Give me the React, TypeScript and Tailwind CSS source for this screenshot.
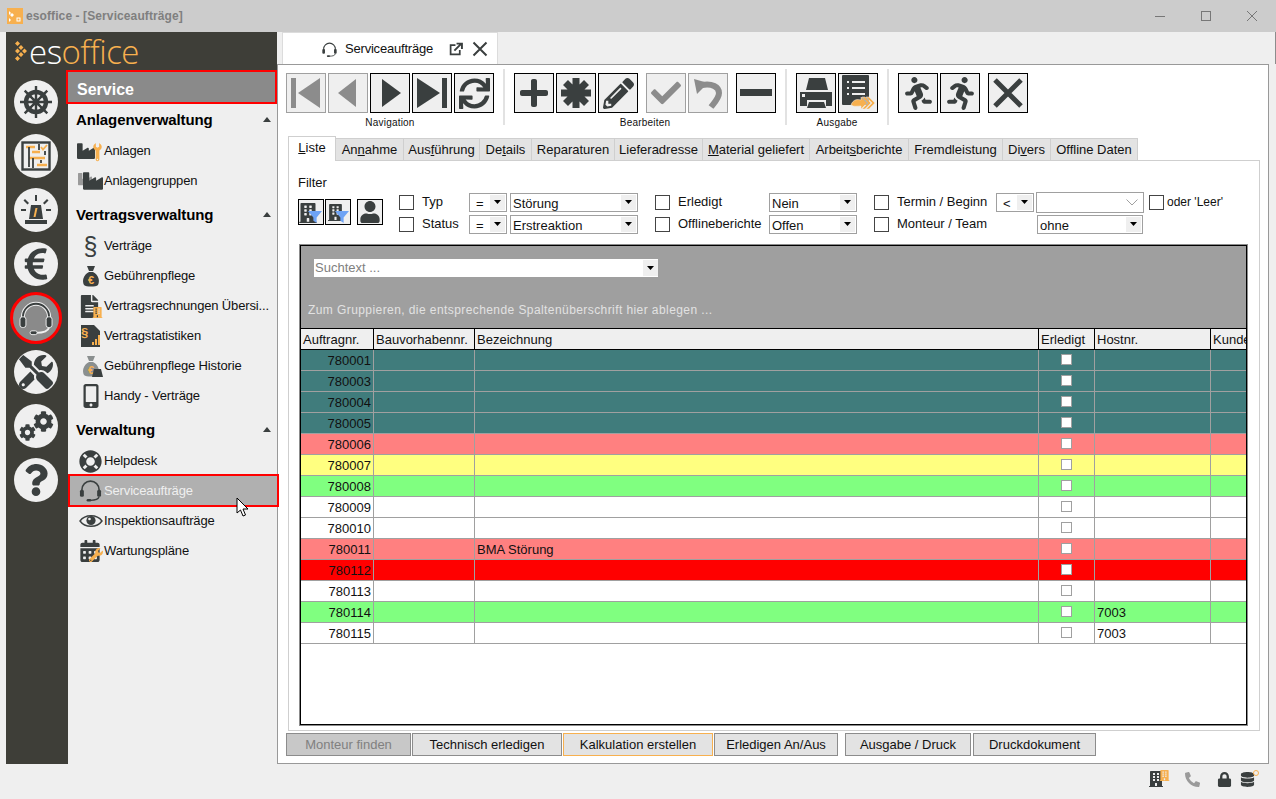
import type { ReactNode } from 'react';
import {
  FaBuilding, FaCalendarAlt, FaCheck, FaCog, FaDatabase, FaEuroSign, FaFileAlt,
  FaIndustry, FaLifeRing, FaLock, FaMobileAlt, FaPencilAlt, FaPhoneAlt, FaPlus,
  FaQuestion, FaRunning, FaSync, FaTools, FaUser, FaWrench,
} from 'react-icons/fa';

const DARK = '#3a3f3f';
const ORANGE = '#f7b04f';

const Headset = ({ size = 24, color = DARK, outline }: { size?: number; color?: string; outline?: boolean }) => (
  <svg width={size} height={size} viewBox="0 0 32 32" fill="none">
    {outline && <path d="M5 19 V15 A11 11 0 0 1 27 15 V19" stroke="#efefef" strokeWidth="3.4" />}
    <path d="M5 19 V15 A11 11 0 0 1 27 15 V19" stroke={color} strokeWidth={outline ? 1.6 : 2} />
    <rect x="2.5" y="15" width="5" height="9" rx="2" fill={color} stroke={outline ? '#efefef' : 'none'} strokeWidth="0.8" />
    <rect x="24.5" y="15" width="5" height="9" rx="2" fill={color} stroke={outline ? '#efefef' : 'none'} strokeWidth="0.8" />
    <path d="M27 24 C26 28 21 28.5 16 28.5" stroke={outline ? '#efefef' : color} strokeWidth="1.6" />
    <rect x="11" y="26.8" width="6" height="3.2" rx="1.6" fill={color} stroke={outline ? '#efefef' : 'none'} strokeWidth="0.8" />
  </svg>
);

const WheelIcon = () => (
  <svg width="32" height="32" viewBox="0 0 32 32" fill="none" stroke={DARK}>
    <path d="M16 0 V32 M0 16 H32 M4.7 4.7 L27.3 27.3 M27.3 4.7 L4.7 27.3" strokeWidth="2.4" />
    <circle cx="16" cy="16" r="10" strokeWidth="4.4" />
    <circle cx="16" cy="16" r="3.4" fill={DARK} strokeWidth="0" />
    <path d="M16 9 V23 M9 16 H23 M11 11 L21 21 M21 11 L11 21" strokeWidth="1.6" />
  </svg>
);

const BagIcon = ({ faded }: { faded?: boolean }) => (
  <svg width="24" height="24" viewBox="0 0 24 24">
    <path d="M8 2 L16 2 L14 7 L10 7 Z M10 8 L14 8 C20 11 21 17 19 21 C17 23 7 23 5 21 C3 17 4 11 10 8 Z" fill={faded ? '#8a8f8f' : DARK} />
    <text x="12" y="20" textAnchor="middle" fontSize="11" fontWeight="700" fill={ORANGE} fontFamily="'Liberation Sans', sans-serif">€</text>
    {faded && <path d="M13 23 L15 15 H22 L24 23 Z" fill={DARK} />}
  </svg>
);

const PlanIcon = () => (
  <svg width="30" height="30" viewBox="0 0 30 30" fill="none">
    <rect x="1.5" y="1.5" width="27" height="27" stroke={DARK} strokeWidth="2.4" />
    <path d="M5 6 H14 M11 11 H19 M8 17 H24 M16 24 H26" stroke={ORANGE} strokeWidth="2.4" />
    <path d="M8 6 V26 M18 3 V9 M12 17 V27 M20 19 V22 M24 10 V14" stroke={DARK} strokeWidth="1.8" />
    <path d="M20 6 L22 8.5 L26 4" stroke={ORANGE} strokeWidth="1.8" />
  </svg>
);

const BeaconIcon = () => (
  <svg width="32" height="32" viewBox="0 0 32 32">
    <path d="M15 1 H17 V7 H15 Z M1 15 H6 V17 H1 Z M26 15 H31 V17 H26 Z" fill={DARK} />
    <path d="M5 5 L9 9 L7.5 10.5 L3.5 6.5 Z M27 5 L23 9 L24.5 10.5 L28.5 6.5 Z" fill={DARK} />
    <path d="M11 11 H21 L23 25 H9 Z" fill={DARK} />
    <path d="M15.5 14 H17.5 L15.5 23 H13.5 Z" fill={ORANGE} />
    <rect x="5" y="26" width="22" height="4" fill={DARK} />
  </svg>
);

const EyeIcon = () => (
  <svg width="24" height="24" viewBox="0 0 24 24" fill="none">
    <path d="M1 12 C6 5 18 5 23 12 C18 19 6 19 1 12 Z" stroke={DARK} strokeWidth="1.4" />
    <circle cx="12" cy="11.5" r="4.6" fill={DARK} />
    <circle cx="10.5" cy="10" r="1.3" fill="#efefef" />
  </svg>
);

const FilterIcon = ({ stacked }: { stacked?: boolean }) => (
  <div className="relative flex h-[26px] w-[26px] items-center justify-center border border-black bg-[#efefef]">
    <FaBuilding size={stacked ? 17 : 20} color={DARK} className="mr-[6px] mt-px" />
    <svg width="14" height="12" viewBox="0 0 13 11" className="absolute bottom-[1px] right-[1px]">
      <path d="M0 0 H13 L8 6 V11 L5 9 V6 Z" fill="#6ea3f5" />
    </svg>
  </div>
);

const nav: { key: string; off?: boolean; icon: ReactNode }[] = [
  {
    key: 'first', off: true,
    icon: <svg width="32" height="32" viewBox="0 0 32 32" fill="#8c8c8c"><rect x="1" y="1" width="5" height="30" /><path d="M30 1 V31 L8 16 Z" /></svg>,
  },
  {
    key: 'prev', off: true,
    icon: <svg width="32" height="32" viewBox="0 0 32 32" fill="#8c8c8c"><path d="M24 2 V30 L6 16 Z" /></svg>,
  },
  {
    key: 'next',
    icon: <svg width="32" height="32" viewBox="0 0 32 32" fill={DARK}><path d="M8 2 V30 L27 16 Z" /></svg>,
  },
  {
    key: 'last',
    icon: <svg width="32" height="32" viewBox="0 0 32 32" fill={DARK}><rect x="26" y="1" width="5" height="30" /><path d="M1 1 V31 L24 16 Z" /></svg>,
  },
  { key: 'sync', icon: <FaSync size={31} color={DARK} /> },
];

const edit: { key: string; off?: boolean; gap?: boolean; icon: ReactNode }[] = [
  { key: 'plus', icon: <FaPlus size={32} color={DARK} /> },
  {
    key: 'star',
    icon: (
      <svg width="32" height="32" viewBox="0 0 32 32" stroke={DARK} strokeWidth="7">
        <path d="M16 1 V31 M1 16 H31 M5.5 5.5 L26.5 26.5 M26.5 5.5 L5.5 26.5" />
      </svg>
    ),
  },
  { key: 'pen', icon: <FaPencilAlt size={31} color={DARK} /> },
  { key: 'ok', off: true, gap: true, icon: <FaCheck size={30} color="#8c8c8c" /> },
  {
    key: 'undo', off: true,
    icon: (
      <svg width="32" height="32" viewBox="0 0 32 32" fill="none">
        <path d="M10 8 C20 6 27 10 27 16 C27 21 23 25 19 30" stroke="#8c8c8c" strokeWidth="6" />
        <path d="M2 2 L16 6 L5 17 Z" fill="#8c8c8c" />
      </svg>
    ),
  },
  { key: 'minus', gap: true, icon: <svg width="32" height="8"><rect width="32" height="7" fill={DARK} /></svg> },
];

const output = [
  {
    key: 'print',
    icon: (
      <svg width="38" height="38" viewBox="1 1 38 38">
        <path d="M13 5 H29 L32 17 H10 Z" fill={DARK} />
        <path d="M4 19 H36 V33 H30 V27 H11 V33 H4 Z" fill={DARK} />
        <rect x="6" y="21" width="3" height="3" fill="#efefef" />
        <path d="M13 29 H28 L30 35 H11 Z" fill={DARK} />
      </svg>
    ),
  },
  {
    key: 'list',
    icon: (
      <svg width="34" height="36" viewBox="0 0 34 36">
        <rect x="1" y="0" width="27" height="30" rx="1" fill={DARK} />
        <path d="M6 6 H8 V8 H6 Z M11 6 H24 V8 H11 Z M6 12 H8 V14 H6 Z M11 12 H24 V14 H11 Z M6 18 H8 V20 H6 Z M11 18 H24 V20 H11 Z" fill="#efefef" />
        <path d="M10 30 C12 24 17 24 20 25 V22 L26 28 L20 34 V31 C16 31 13 32 10 30 Z M24 22 L30 28 L24 34 H21 L27 28 L21 22 Z M28 22 L34 28 L28 34 H25 L31 28 L25 22 Z" fill={ORANGE} stroke="#efefef" strokeWidth="0.5" />
      </svg>
    ),
  },
];

const tabs: { w: string; label: ReactNode }[] = [
  { w: 'w-[68px]', label: <>An<u>n</u>ahme</> },
  { w: 'w-[76px]', label: <>Aus<u>f</u>ührung</> },
  { w: 'w-[52px]', label: <>De<u>t</u>ails</> },
  { w: 'w-[83px]', label: <>Reparaturen</> },
  { w: 'w-[88px]', label: <>Lieferadresse</> },
  { w: 'w-[107px]', label: <><u>M</u>aterial geliefert</> },
  { w: 'w-[99px]', label: <>Arbeit<u>s</u>berichte</> },
  { w: 'w-[94px]', label: <>Fremdleistung</> },
  { w: 'w-[48px]', label: <>Di<u>v</u>ers</> },
  { w: 'w-[87px]', label: <>Offline Daten</> },
];

const rows = [
  { nr: '780001', bg: 'bg-[#407c7c]' },
  { nr: '780003', bg: 'bg-[#407c7c]' },
  { nr: '780004', bg: 'bg-[#407c7c]' },
  { nr: '780005', bg: 'bg-[#407c7c]' },
  { nr: '780006', bg: 'bg-[#ff8080]' },
  { nr: '780007', bg: 'bg-[#ffff80]' },
  { nr: '780008', bg: 'bg-[#80ff80]' },
  { nr: '780009', bg: 'bg-white' },
  { nr: '780010', bg: 'bg-white' },
  { nr: '780011', bg: 'bg-[#ff8080]', text: 'BMA Störung' },
  { nr: '780112', bg: 'bg-[#ff0000]' },
  { nr: '780113', bg: 'bg-white' },
  { nr: '780114', bg: 'bg-[#80ff80]', host: '7003' },
  { nr: '780115', bg: 'bg-white', host: '7003' },
];

const sections: { title: string; items: { label: string; icon: ReactNode; active?: boolean }[] }[] = [
  {
    title: 'Anlagenverwaltung',
    items: [
      {
        label: 'Anlagen',
        icon: (
          <span className="flex items-center">
            <FaIndustry size={18} color={DARK} />
            <FaWrench size={15} color={ORANGE} className="-ml-[5px] -rotate-45" />
          </span>
        ),
      },
      {
        label: 'Anlagengruppen',
        icon: (
          <span className="flex items-center">
            <FaIndustry size={14} color="#9a9a9a" className="-mr-[9px] -mt-[5px]" />
            <FaIndustry size={20} color={DARK} />
          </span>
        ),
      },
    ],
  },
  {
    title: 'Vertragsverwaltung',
    items: [
      { label: 'Verträge', icon: <span className="text-[25px] leading-none text-[#3a3f3f]">§</span> },
      { label: 'Gebührenpflege', icon: <BagIcon /> },
      {
        label: 'Vertragsrechnungen Übersi...',
        icon: (
          <span className="flex items-end">
            <FaFileAlt size={23} color={DARK} />
            <FaBuilding size={11} color={ORANGE} className="-ml-[9px]" />
          </span>
        ),
      },
      {
        label: 'Vertragstatistiken',
        icon: (
          <svg width="24" height="24" viewBox="0 0 24 24">
            <path d="M2 1 H15 L21 7 V23 H2 Z" fill={DARK} />
            <text x="2" y="13" fontSize="13" fontWeight="700" fill={ORANGE} fontFamily="'Liberation Sans', sans-serif">§</text>
            <path d="M13 21 H15 V18 H13 Z M16 21 H18 V15 H16 Z M19 21 H21 V11 H19 Z" fill={ORANGE} />
          </svg>
        ),
      },
      { label: 'Gebührenpflege Historie', icon: <BagIcon faded /> },
      { label: 'Handy - Verträge', icon: <FaMobileAlt size={24} color={DARK} /> },
    ],
  },
  {
    title: 'Verwaltung',
    items: [
      { label: 'Helpdesk', icon: <FaLifeRing size={23} color={DARK} /> },
      { label: 'Serviceaufträge', icon: <Headset size={25} />, active: true },
      { label: 'Inspektionsaufträge', icon: <EyeIcon /> },
      {
        label: 'Wartungspläne',
        icon: (
          <span className="flex items-end">
            <FaCalendarAlt size={22} color={DARK} />
            <FaWrench size={14} color={ORANGE} className="-ml-[12px]" />
          </span>
        ),
      },
    ],
  },
];

const rail: ReactNode[] = [
  <WheelIcon />,
  <PlanIcon />,
  <BeaconIcon />,
  <FaEuroSign size={36} color={DARK} />,
  null,
  <FaTools size={34} color={DARK} />,
  <span className="flex">
    <FaCog size={17} color={DARK} className="mt-[13px]" />
    <FaCog size={21} color={DARK} className="-ml-[3px]" />
  </span>,
  <FaQuestion size={32} color={DARK} />,
];

const ToolButton = ({ off, gap, children }: { off?: boolean; gap?: boolean; children: ReactNode }) => (
  <button
    className={`flex h-10 w-10 items-center justify-center overflow-hidden border bg-[#efefef] ${off ? 'border-[#a0a0a0]' : 'border-black'} ${gap ? 'ml-[6px]' : ''}`}
  >
    {children}
  </button>
);

const Separator = () => <div className="mx-[9px] -mt-1 h-14 w-[2px] bg-[#e2e2e2]" />;

const Box = () => <span className="block h-[15px] w-[15px] shrink-0 border border-[#444] bg-white" />;

const Check = ({ label }: { label: string }) => (
  <label className="flex h-[22px] items-center gap-2 text-[13px] text-[#111]">
    <Box />
    {label}
  </label>
);

const Combo = ({ label, w, short }: { label: string; w: string; short?: boolean }) => (
  <div className={`flex h-[19px] items-center justify-between border border-[#a0a0a0] bg-white pr-[1px] text-[13px] leading-none text-[#111] ${short ? 'pl-[6px]' : 'pl-[2px]'} ${w}`}>
    <span className="pt-[3px]">{label}</span>
    <span className="flex h-[15px] w-[15px] items-center justify-center bg-[#efefef]">
      <svg width="7" height="4"><path d="M0 0 H7 L3.5 4 Z" fill="#000" /></svg>
    </span>
  </div>
);

const Caret = () => (
  <svg width="8" height="5"><path d="M4 0 L8 5 H0 Z" fill={DARK} /></svg>
);

const App = () => {
  return (
    <div className="relative flex h-[799px] w-[1276px] flex-col overflow-hidden bg-[#efefef] font-['Liberation_Sans',Arial,sans-serif] text-[13px] text-[#111]">
      {/* Title bar */}
      <div className="flex h-8 shrink-0 items-center bg-[#cccccc] pl-[7px]">
        <svg width="16" height="16" viewBox="0 0 16 16">
          <rect width="16" height="16" fill={ORANGE} />
          <path d="M2 3 L4 5 L2 7 Z M5 5 L7 7 L5 9 L3 7 Z M2 10 L4 12 L2 14 Z" fill="#fff" />
          <rect x="10" y="10" width="3" height="3" fill="none" stroke="#fff" />
        </svg>
        <span className="ml-[3px] text-[12px] font-bold tracking-[0.1px] text-[#7f7f7f]">esoffice - [Serviceaufträge]</span>
        <div className="ml-auto flex items-center gap-[36px] pr-[19px]">
          <svg width="10" height="10"><path d="M0 5.5 H10" stroke="#777" /></svg>
          <svg width="10" height="10"><rect x="0.5" y="0.5" width="9" height="9" fill="none" stroke="#777" /></svg>
          <svg width="10" height="10"><path d="M0 0 L10 10 M10 0 L0 10" stroke="#777" /></svg>
        </div>
      </div>

      <div className="flex h-[732px] shrink-0">
        {/* Left navigation */}
        <div className="ml-[6px] flex w-[271px] shrink-0 flex-col">
          <div className="flex h-[38px] shrink-0 items-center bg-[#3e3e38] pl-[9px]">
            <svg width="12" height="20" viewBox="0 0 12 20" fill={ORANGE}>
              <path d="M0 2.5 L2.5 0 L5 2.5 L2.5 5 Z M3.5 6.5 L6 4 L8.5 6.5 L6 9 Z M0 10 L2.5 7.5 L5 10 L2.5 12.5 Z M7 10 L9.5 7.5 L12 10 L9.5 12.5 Z M3.5 13.5 L6 11 L8.5 13.5 L6 16 Z M0 17.5 L2.5 15 L5 17.5 L2.5 20 Z" />
            </svg>
            <span className="ml-[2px] font-['Open_Sans',sans-serif] text-[33px] font-light leading-none tracking-[-0.5px] text-white">
              es<span className="text-[#f7b04f]">office</span>
            </span>
          </div>
          <div className="flex min-h-0 flex-1">
            <div className="flex w-[62px] shrink-0 flex-col items-center bg-[#3e3e38] pr-[2px] pt-[5px]">
              {rail.map((icon, i) => (
                <div key={i} className="flex h-[54px] w-full shrink-0 items-center justify-center">
                  {icon ? (
                    <div className="flex h-[44px] w-[44px] items-center justify-center rounded-full bg-[#efefef]">{icon}</div>
                  ) : (
                    <div className="flex h-[52px] w-[52px] items-center justify-center rounded-full border-[3px] border-[#ff0000] bg-[#8a8a8a]">
                      <Headset size={38} color={DARK} outline />
                    </div>
                  )}
                </div>
              ))}
            </div>
            <div className="relative w-[209px] shrink-0">
              <div className="-ml-[2px] flex h-[34px] items-center border-2 border-[#ff0000] bg-[#8a8a8a] pl-[9px] pt-[5px] text-[16px] font-bold text-white">
                Service
              </div>
              {sections.map((s) => (
                <div key={s.title}>
                  <div className="flex h-[32px] items-center justify-between pb-[2px] pl-[8px] pr-[6px] text-[15px] font-bold leading-none tracking-[-0.1px] text-black">
                    {s.title}
                    <Caret />
                  </div>
                  {s.items.map((item) => (
                    <div
                      key={item.label}
                      className={`flex items-center ${item.active ? 'relative z-10 -mb-px -mt-[2px] h-[33px] w-[211px] border-2 border-[#ff0000] bg-[#b0b0b0] pl-[7px] text-[#efefef]' : 'h-[30px] pl-[9px]'}`}
                    >
                      <span className="flex h-6 w-[27px] shrink-0 items-center justify-center">{item.icon}</span>
                      <span className="whitespace-nowrap text-[13px] tracking-[-0.15px]">{item.label}</span>
                    </div>
                  ))}
                  <div className="h-[3px]" />
                </div>
              ))}
            </div>
          </div>
        </div>

        {/* Work area */}
        <div className="flex min-w-0 flex-1 flex-col">
          <div className="flex h-8 shrink-0 border-r border-[#8c8c8c] pl-[5px]">
            <div className="flex h-[33px] w-[216px] items-center border-x border-t border-[#dcdcdc] bg-white pl-[38px]">
              <Headset size={17} />
              <span className="ml-[7px] text-[13px] tracking-[-0.2px]">Serviceaufträge</span>
              <svg width="14" height="14" viewBox="0 0 13 13" fill="none" className="ml-[16px]">
                <path d="M10 7.5 V11.5 H1.5 V3 H6" stroke={DARK} strokeWidth="1.6" />
                <path d="M5 8 L11 2 M7 1.5 H12 V6.5" stroke={DARK} strokeWidth="1.8" />
              </svg>
              <svg width="16" height="16" className="ml-[9px]">
                <path d="M1.5 1.5 L14.5 14.5 M14.5 1.5 L1.5 14.5" stroke={DARK} strokeWidth="2" />
              </svg>
            </div>
          </div>
          <div className="flex h-[700px] w-[992px] shrink-0 flex-col border border-[#999] bg-white pl-[8px]">
            {/* Toolbar */}
            <div className="flex h-[71px] shrink-0 items-start pt-[8px]">
              <div className="flex flex-col items-center">
                <div className="flex gap-[2px]">
                  {nav.map((b) => <ToolButton key={b.key} off={b.off}>{b.icon}</ToolButton>)}
                </div>
                <span className="mt-[4px] text-[10px] leading-[12px] tracking-[0.2px]">Navigation</span>
              </div>
              <Separator />
              <div className="flex flex-col items-center">
                <div className="flex gap-[2px]">
                  {edit.map((b) => <ToolButton key={b.key} off={b.off} gap={b.gap}>{b.icon}</ToolButton>)}
                </div>
                <span className="mt-[4px] text-[10px] leading-[12px] tracking-[0.2px]">Bearbeiten</span>
              </div>
              <Separator />
              <div className="flex flex-col items-center">
                <div className="flex gap-[2px]">
                  {output.map((b) => <ToolButton key={b.key}>{b.icon}</ToolButton>)}
                </div>
                <span className="mt-[4px] text-[10px] leading-[12px] tracking-[0.2px]">Ausgabe</span>
              </div>
              <Separator />
              <div className="flex gap-[2px]">
                <ToolButton><FaRunning size={33} color={DARK} className="-scale-x-100" /></ToolButton>
                <ToolButton><FaRunning size={33} color={DARK} /></ToolButton>
                <ToolButton gap>
                  <svg width="32" height="32"><path d="M3 3 L29 29 M29 3 L3 29" stroke={DARK} strokeWidth="5" /></svg>
                </ToolButton>
              </div>
            </div>

            {/* Tabs */}
            <div className="relative z-10 -mb-px ml-[2px] flex h-[25px] shrink-0 items-end">
              <div className="flex h-[25px] w-[48px] items-center justify-center border-x border-t border-[#cfcfcf] bg-white pb-[2px]">
                <span><u>L</u>iste</span>
              </div>
              {tabs.map((t, i) => (
                <div key={i} className={`flex h-[23px] shrink-0 items-center justify-center whitespace-nowrap border-y border-r border-[#cfcfcf] bg-[#e3e3e3] ${t.w}`}>
                  {t.label}
                </div>
              ))}
            </div>

            {/* Tab page */}
            <div className="ml-[2px] flex h-[571px] w-[972px] shrink-0 flex-col border border-[#cfcfcf] px-[10px]">
              <div className="-ml-px flex h-[84px] shrink-0 flex-col">
                <div className="h-[15px] pt-[15px] leading-none">Filter</div>
                <div className="mt-[2px] flex">
                  <div className="mt-[21px] flex h-[26px] w-[101px] shrink-0">
                    <FilterIcon />
                    <div className="ml-px"><FilterIcon stacked /></div>
                    <div className="ml-[6px] flex h-[26px] w-[26px] items-center justify-center border border-black bg-[#efefef]">
                      <FaUser size={22} color={DARK} />
                    </div>
                  </div>
                  <div className="mt-[13px] grid grid-cols-[70px_41px_145px_114px_105px_122px_1fr] grid-rows-[22px_22px] items-center">
                    <Check label="Typ" />
                    <Combo label="=" w="w-[38px]" short />
                    <Combo label="Störung" w="w-[128px]" />
                    <Check label="Erledigt" />
                    <Combo label="Nein" w="w-[88px]" />
                    <Check label="Termin / Beginn" />
                    <div className="flex items-center">
                      <Combo label="<" w="w-[38px]" short />
                      <div className="ml-[2px] flex h-[21px] w-[108px] items-center justify-end border border-[#a0a0a0] bg-white pr-[5px]">
                        <svg width="12" height="7"><path d="M0.5 0.5 L6 6 L11.5 0.5" fill="none" stroke="#a0a0a0" /></svg>
                      </div>
                      <span className="ml-[5px] mr-[3px]"><Box /></span>
                      <span className="whitespace-nowrap text-[12px]">oder 'Leer'</span>
                    </div>
                    <Check label="Status" />
                    <Combo label="=" w="w-[38px]" short />
                    <Combo label="Erstreaktion" w="w-[128px]" />
                    <Check label="Offlineberichte" />
                    <Combo label="Offen" w="w-[88px]" />
                    <Check label="Monteur / Team" />
                    <div className="pl-[41px]"><Combo label="ohne" w="w-[106px]" /></div>
                  </div>
                </div>
              </div>

              {/* Grid */}
              <div className="ml-px flex h-[480px] w-[947px] shrink-0 flex-col overflow-hidden border border-black ring-1 ring-[#8c8c8c]">
                <div className="flex h-[82px] shrink-0 flex-col bg-[#9f9f9f]">
                  <div className="ml-[13px] mt-[13px] flex h-[18px] w-[344px] items-center justify-between bg-white pl-px text-[#808080]">
                    Suchtext ...
                    <span className="flex h-[16px] w-[15px] items-center justify-center bg-[#efefef]">
                      <svg width="7" height="4"><path d="M0 0 H7 L3.5 4 Z" fill="#000" /></svg>
                    </span>
                  </div>
                  <div className="ml-[7px] mt-[24px] text-[12px] tracking-[0.42px] text-[#e2e2e2]">
                    Zum Gruppieren, die entsprechende Spaltenüberschrift hier ablegen ...
                  </div>
                </div>
                <div className="grid h-[22px] shrink-0 grid-cols-[73px_101px_564px_56px_116px_1fr] border-y border-black bg-[#efefef] text-[13px] leading-[20px]">
                  <div className="border-r border-black pl-[2px] pt-px">Auftragnr.</div>
                  <div className="border-r border-black pl-[2px] pt-px">Bauvorhabennr.</div>
                  <div className="border-r border-black pl-[2px] pt-px">Bezeichnung</div>
                  <div className="border-r border-black pl-[2px] pt-px">Erledigt</div>
                  <div className="border-r border-black pl-[2px] pt-px">Hostnr.</div>
                  <div className="overflow-hidden whitespace-nowrap pl-[2px] pt-px">Kundennr.</div>
                </div>
                {rows.map((r) => (
                  <div key={r.nr} className={`grid h-[21px] shrink-0 grid-cols-[73px_101px_564px_56px_116px_1fr] border-b border-[#a0a0a0] text-[13px] leading-[19px] ${r.bg}`}>
                    <div className="border-r border-[#a0a0a0] pr-[2px] pt-px text-right">{r.nr}</div>
                    <div className="border-r border-[#a0a0a0]" />
                    <div className="border-r border-[#a0a0a0] pl-[2px] pt-px">{r.text}</div>
                    <div className="flex items-center justify-center border-r border-[#a0a0a0] pb-[2px]">
                      <span className="block h-[11px] w-[11px] border border-[#a0a0a0] bg-white" />
                    </div>
                    <div className="border-r border-[#a0a0a0] pl-[2px] pt-px">{r.host}</div>
                    <div />
                  </div>
                ))}
              </div>
            </div>

            {/* Action buttons */}
            <div className="mt-[2px] flex h-[23px] shrink-0 text-[13px]">
              <button className="w-[125px] border border-[#8c8c8c] bg-[#c8c8c8] text-[#808080]">Monteur finden</button>
              <button className="ml-px w-[150px] border border-[#8c8c8c] bg-[#e3e3e3]">Technisch erledigen</button>
              <button className="ml-px w-[150px] border border-[#f7b04f] bg-[#e3e3e3]">Kalkulation erstellen</button>
              <button className="ml-px w-[124px] border border-[#8c8c8c] bg-[#e3e3e3]">Erledigen An/Aus</button>
              <button className="ml-[7px] w-[126px] border border-[#8c8c8c] bg-[#e3e3e3]">Ausgabe / Druck</button>
              <button className="ml-[2px] w-[123px] border border-[#8c8c8c] bg-[#e3e3e3]">Druckdokument</button>
            </div>
          </div>
        </div>
      </div>

      {/* Status bar */}
      <div className="flex h-[35px] shrink-0 items-start justify-end pr-[17px] pt-[6px]">
        <span className="flex items-end">
          <FaBuilding size={16} color={DARK} />
          <FaBuilding size={11} color={ORANGE} className="-ml-[5px] mb-[6px]" />
        </span>
        <FaPhoneAlt size={15} color="#9a9a9a" className="ml-[15px] mt-[2px]" />
        <FaLock size={15} color={DARK} className="ml-[17px] mt-[2px]" />
        <FaDatabase size={15} color={DARK} className="ml-[8px] mt-[2px]" />
        <span className="-ml-[2px] block h-[6px] w-[6px] rounded-full border border-[#f7b04f]" />
      </div>

      {/* Mouse pointer */}
      <svg width="14" height="21" viewBox="0 0 14 21" className="absolute left-[236px] top-[497px] z-20">
        <path d="M1 1 V16 L4.5 13 L7 19 L9.5 18 L7 12 H12 Z" fill="#fff" stroke="#000" />
      </svg>
    </div>
  );
};

export default App;
